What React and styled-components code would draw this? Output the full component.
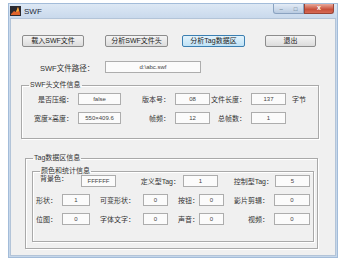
import React from 'react'
import styled, {createGlobalStyle} from 'styled-components'

const GlobalStyle = createGlobalStyle`
  html, body { margin:0; padding:0; background:#fff; }
  body { font-family:"Liberation Sans", "Noto Sans CJK SC", sans-serif; }
`

const headerRow1 = [
    {label: '是否压缩：', value: 'false'},
    {label: '版本号：', value: '08'},
    {label: '文件长度：', value: '137'},
]
const headerRow2 = [
    {label: '宽度×高度：', value: '550×409.6'},
    {label: '帧频：', value: '12'},
    {label: '总帧数：', value: '1'},
]
const countRows = [
    [
        {label: '形状：', value: '1', align: 'start', pad: 3},
        {label: '可变形状：', value: '0', align: 'start', pad: 10},
        {label: '按钮：', value: '0', align: 'start', pad: 10},
        {label: '影片剪辑：', value: '0', align: 'end', pad: 5},
    ],
    [
        {label: '位图：', value: '0', align: 'start', pad: 3},
        {label: '字体文字：', value: '0', align: 'start', pad: 10},
        {label: '声音：', value: '0', align: 'start', pad: 10},
        {label: '视频：', value: '0', align: 'end', pad: 5},
    ],
]

function AppIcon() {
    return (
        <svg width="11" height="10" viewBox="0 0 11 10">
            <rect width="11" height="10" fill="#2a2a30"/>
            <path d="M1 8 L4 5 L6 6 L8 1 L10 7 L10 9 L1 9 Z" fill="#e0632a"/>
            <path d="M6 6 L8 1 L9 5 Z" fill="#f6b03c"/>
        </svg>
    )
}

function App() {
    return (
        <>
            <GlobalStyle/>
            <Window>
                <TitleBar>
                    <AppIcon/>
                    <Caption>SWF</Caption>
                    <CaptionButtons>
                        <MinMax>
                            <Glyph>–</Glyph>
                            <Glyph>□</Glyph>
                        </MinMax>
                        <CloseButton>x</CloseButton>
                    </CaptionButtons>
                </TitleBar>
                <Client>
                    <ButtonRow>
                        <Button $w={62} $ml={11}>载入SWF文件</Button>
                        <Button $w={63} $ml={21}>分析SWF文件头</Button>
                        <Button $w={63} $ml={14} $active>分析Tag数据区</Button>
                        <Button $w={51} $ml={20}>退出</Button>
                    </ButtonRow>

                    <PathRow>
                        <PathLabel>SWF文件路径：</PathLabel>
                        <Field $w={96}>d:\abc.swf</Field>
                    </PathRow>

                    <Group $w={298} $ml={10} $mt={8} $pt={4} $pb={14}>
                        <Legend $ml={7}>SWF头文件信息</Legend>
                        <HeaderGrid>
                            {headerRow1.map(f => (
                                <React.Fragment key={f.label}>
                                    <Label $align="end" $pad={5}>{f.label}</Label>
                                    <Field>{f.value}</Field>
                                </React.Fragment>
                            ))}
                            <Label $align="start" $pad={6}>字节</Label>
                            {headerRow2.map(f => (
                                <React.Fragment key={f.label}>
                                    <Label $align="end" $pad={5}>{f.label}</Label>
                                    <Field>{f.value}</Field>
                                </React.Fragment>
                            ))}
                        </HeaderGrid>
                    </Group>

                    <Group $w={293} $ml={14} $mt={15} $pt={5} $pb={6} $px={6} $pr={4}>
                        <Legend $ml={1}>Tag数据区信息</Legend>
                        <Group $w={282} $pb={16}>
                            <Legend $ml={7}>颜色和统计信息</Legend>
                            <ColorGrid>
                                <Label $align="start" $pad={7} $raised>背景色：</Label>
                                <Field>FFFFFF</Field>
                                <Label $align="end" $pad={3}>定义型Tag：</Label>
                                <Field>1</Field>
                                <Label $align="end" $pad={2}>控制型Tag：</Label>
                                <Field>5</Field>
                            </ColorGrid>
                            <CountGrid>
                                {countRows.map(row => row.map(f => (
                                    <React.Fragment key={f.label}>
                                        <Label $align={f.align} $pad={f.pad}>{f.label}</Label>
                                        <Field>{f.value}</Field>
                                    </React.Fragment>
                                )))}
                            </CountGrid>
                        </Group>
                    </Group>
                </Client>
            </Window>
        </>
    )
}

export default App

const Window=styled.div`
    margin:3px 0 0 8px;
    width:330px;
    height:255px;
    box-sizing:border-box;
    border:1px solid #a3bcd9;
    background:linear-gradient(#dde8f4, #c9d9ec 14px, #c6d7ea);
    display:flex;
    flex-direction:column;
`

const TitleBar=styled.div`
    height:14px;
    flex:none;
    display:flex;
    align-items:center;
    padding:0 3px 0 1px;
`

const Caption=styled.span`
    font-size:8px;
    color:#1e2a38;
    margin-left:3px;
`

const CaptionButtons=styled.div`
    margin-left:auto;
    align-self:flex-start;
    display:flex;
`

const MinMax=styled.div`
    width:31px;
    height:10px;
    box-sizing:border-box;
    border:1px solid #8aa2c0;
    border-top:none;
    border-radius:0 0 0 3px;
    background:linear-gradient(#e4ecf6, #b9cbe1);
    display:flex;
    justify-content:space-around;
    align-items:center;
`

const Glyph=styled.span`
    font-size:6px;
    line-height:6px;
    color:#4b5f78;
`

const CloseButton=styled.div`
    width:30px;
    height:10px;
    box-sizing:border-box;
    border:1px solid #9a4536;
    border-top:none;
    border-radius:0 0 3px 0;
    background:linear-gradient(#e9a89a, #c8503a 60%, #d66a55);
    color:#fff;
    font-size:7px;
    font-weight:700;
    line-height:8px;
    text-align:center;
`

const Client=styled.div`
    flex:1;
    margin:0 1px 1px;
    box-sizing:border-box;
    border:1px solid #b3c4d8;
    background:#f0f0f0;
    display:flex;
    flex-direction:column;
    align-items:flex-start;
`

const ButtonRow=styled.div`
    display:flex;
    margin-top:16px;
`

const Button=styled.div`
    width:${p => p.$w}px;
    margin-left:${p => p.$ml}px;
    height:12px;
    box-sizing:border-box;
    border:1px solid ${p => p.$active ? '#3c7fb1' : '#8c8c8c'};
    border-radius:2px;
    background:${p => p.$active
        ? 'linear-gradient(#e3f3fc, #bfe2f6)'
        : 'linear-gradient(#f4f4f4, #dcdcdc)'};
    font-size:7px;
    line-height:10px;
    text-align:center;
    color:#222;
    white-space:nowrap;
`

const PathRow=styled.div`
    display:flex;
    align-items:center;
    margin:14px 0 0 29px;
`

const PathLabel=styled.span`
    width:65px;
    font-size:7.5px;
    color:#333;
    white-space:nowrap;
`

const Group=styled.fieldset`
    width:${p => p.$w}px;
    box-sizing:border-box;
    margin:${p => p.$mt || 0}px 0 0 ${p => p.$ml || 0}px;
    padding:${p => p.$pt || 0}px ${p => p.$pr || 0}px ${p => p.$pb || 0}px ${p => p.$px || 0}px;
    min-inline-size:0;
    border:1px solid #a9a9a9;
    box-shadow:1px 1px 0 #fff, inset 1px 1px 0 #fff;
`

const Legend=styled.legend`
    margin-left:${p => p.$ml}px;
    padding:0 1px;
    font-size:7px;
    line-height:8px;
    color:#333;
`

const Label=styled.span`
    justify-self:${p => p.$align};
    padding:${p => p.$align === 'end' ? `0 ${p.$pad}px 0 0` : `0 0 0 ${p.$pad}px`};
    font-size:7px;
    color:#333;
    white-space:nowrap;
    align-self:${p => p.$raised ? 'start' : 'center'};
    margin-top:${p => p.$raised ? '-2px' : '0'};
`

const Field=styled.div`
    width:${p => p.$w ? `${p.$w}px` : 'auto'};
    height:12px;
    box-sizing:border-box;
    border:1px solid #adadad;
    background:#fbfbfb;
    font-size:6px;
    line-height:10px;
    text-align:center;
    color:#444;
    white-space:nowrap;
    overflow:hidden;
`

const HeaderGrid=styled.div`
    display:grid;
    grid-template-columns:56px 43px 54px 35px 41px 35px auto;
    row-gap:7px;
`

const ColorGrid=styled.div`
    display:grid;
    grid-template-columns:48px 35px 67px 35px 57px 35px;
`

const CountGrid=styled.div`
    display:grid;
    grid-template-columns:29px 28px 53px 25px 31px 25px 50px 36px;
    row-gap:7px;
    margin-top:7px;
`
